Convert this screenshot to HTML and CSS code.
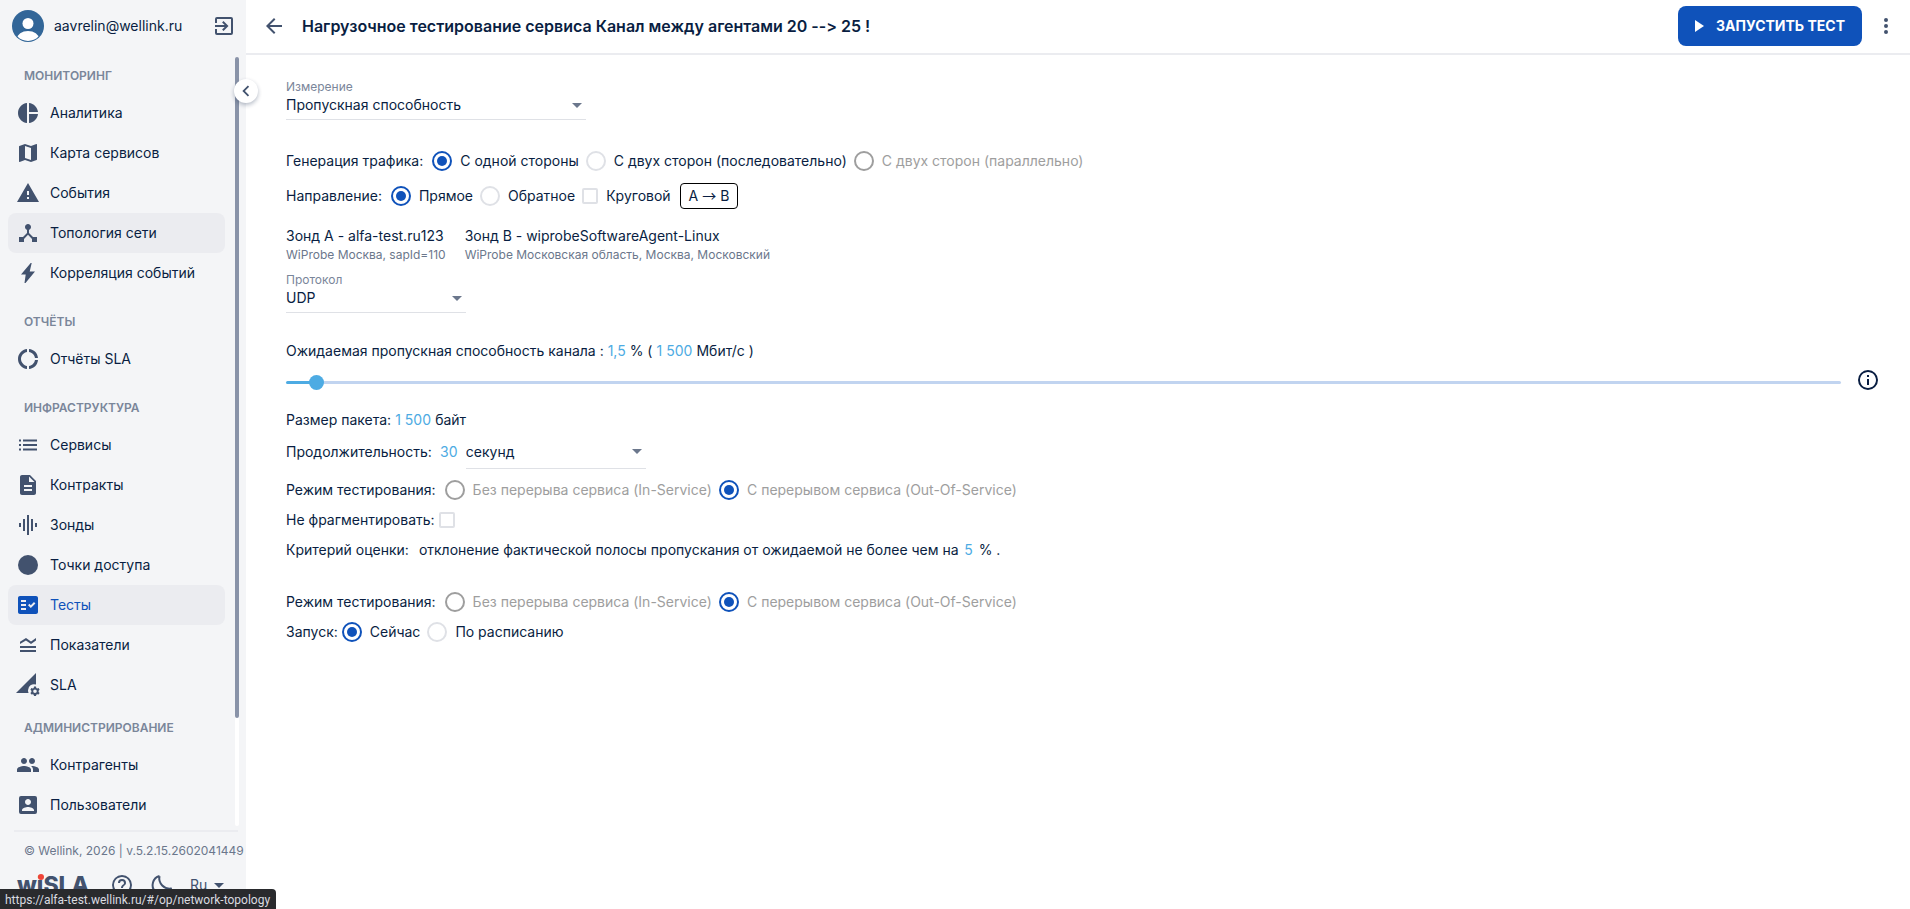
FILE: index.html
```html
<!DOCTYPE html>
<html lang="ru">
<head>
    <meta charset="UTF-8">
    <meta name="viewport" content="width=device-width, initial-scale=1.0">
    <title>wiSLA</title>
    <link rel="stylesheet" href="styles.css">
</head>
<body>

<aside class="sidebar">
    <div class="user">
        <svg class="avatar" viewBox="0 0 32 32">
            <defs><clipPath id="avatarClip"><circle cx="16" cy="16" r="15"/></clipPath></defs>
            <circle cx="16" cy="16" r="16" fill="#326698"/>
            <circle cx="16" cy="13.500" r="5.500" fill="#fff"/>
            <ellipse cx="16" cy="29" rx="11" ry="8" fill="#fff" clip-path="url(#avatarClip)"/>
        </svg>
        <span class="user-name">aavrelin@wellink.ru</span>
        <button class="icon-button" type="button" aria-label="Выход">
            <svg class="icon" viewBox="0 0 24 24"><path d="M10.090 15.590 11.500 17l5-5-5-5-1.410 1.410L12.670 11H3v2h9.670zM19 3H5a2 2 0 0 0-2 2v4h2V5h14v14H5v-4H3v4a2 2 0 0 0 2 2h14a2 2 0 0 0 2-2V5a2 2 0 0 0-2-2"/></svg>
        </button>
    </div>

    <div class="nav-area">
        <nav class="nav">
            <section class="nav-group">
                <h2>Мониторинг</h2>
                <a href="#"><svg class="icon" viewBox="0 0 24 24"><path d="M11 2v20c-5.070-.5-9-4.790-9-10s3.930-9.500 9-10m2.030 0v8.990H22c-.47-4.740-4.240-8.520-8.970-8.990m0 11.010V22c4.740-.47 8.500-4.250 8.970-8.990z"/></svg>Аналитика</a>
                <a href="#"><svg class="icon" viewBox="0 0 24 24"><path d="m20.500 3-.16.030L15 5.100 9 3 3.360 4.900c-.21.070-.36.250-.36.480V20.500c0 .28.220.5.500.5l.16-.03L9 18.900l6 2.100 5.640-1.900c.21-.07.36-.25.36-.48V3.500c0-.28-.22-.5-.5-.5M15 19l-6-2.110V5l6 2.110z"/></svg>Карта сервисов</a>
                <a href="#"><svg class="icon" viewBox="0 0 24 24"><path d="M1 21h22L12 2zm12-3h-2v-2h2zm0-4h-2v-4h2z"/></svg>События</a>
                <a href="#" class="hovered"><svg class="icon" viewBox="0 0 24 24"><path d="m17 16-4-4V8.820C14.160 8.400 15 7.300 15 6c0-1.660-1.340-3-3-3S9 4.340 9 6c0 1.300.84 2.400 2 2.820V12l-4 4H3v5h5v-3.050l4-4.200 4 4.200V21h5v-5z"/></svg>Топология сети</a>
                <a href="#"><svg class="icon" viewBox="0 0 24 24"><path d="M14.700 2 5 13.500h4.700L8.500 22h1L19 10.500h-5.300L15.700 2z"/></svg>Корреляция событий</a>
            </section>
            <section class="nav-group">
                <h2>Отчёты</h2>
                <a href="#"><svg class="icon" viewBox="0 0 24 24"><path d="M11 5.080V2c-5 .5-9 4.810-9 10s4 9.500 9 10v-3.080c-3-.48-6-3.400-6-6.920s3-6.440 6-6.920M18.970 11H22c-.47-5-4-8.530-9-9v3.080C16 5.510 18.540 8 18.970 11M13 18.920V22c5-.47 8.530-4 9-9h-3.030c-.43 3-2.970 5.490-5.970 5.920"/></svg>Отчёты SLA</a>
            </section>
            <section class="nav-group">
                <h2>Инфраструктура</h2>
                <a href="#"><svg class="icon" viewBox="0 0 24 24"><path d="M3 11h2v2H3zm0 4.500h2v2H3zm0-9h2v2H3zm4 4.500h14v2H7zm0 4.500h14v2H7zm0-9h14v2H7z"/></svg>Сервисы</a>
                <a href="#"><svg class="icon" viewBox="0 0 24 24"><path d="M14 2H6c-1.100 0-1.990.9-1.990 2L4 20c0 1.100.89 2 1.990 2H18c1.100 0 2-.9 2-2V8zm2 16H8v-2h8zm0-4H8v-2h8zm-3-5V3.500L18.500 9z"/></svg>Контракты</a>
                <a href="#"><svg class="icon" viewBox="0 0 24 24"><path d="M7 18h2V6H7zm4 4h2V2h-2zm-8-8h2v-4H3zm12 4h2V6h-2zm4-8v4h2v-4z"/></svg>Зонды</a>
                <a href="#"><svg class="icon" viewBox="0 0 24 24"><circle cx="12" cy="12" r="10"/></svg>Точки доступа</a>
                <a href="#" class="active"><svg class="icon" viewBox="0 0 24 24"><path fill-rule="evenodd" d="M20 3H4c-1.100 0-2 .9-2 2v14c0 1.100.9 2 2 2h16c1.100 0 2-.9 2-2V5c0-1.100-.9-2-2-2M10 17H5v-2h5zm0-4H5v-2h5zm0-4H5V7h5zm4.820 6L12 12.160l1.410-1.410 1.410 1.420L17.990 9l1.420 1.420z"/></svg>Тесты</a>
                <a href="#"><svg class="icon" viewBox="0 0 24 24"><path d="M20 15H4v-2h16zm0 2H4v2h16zm-5-6 5-3.550V5l-5 3.550L10 5 4 8.660V11l5.920-3.610z"/></svg>Показатели</a>
                <a href="#"><svg class="icon" viewBox="0 0 24 24"><path fill-rule="evenodd" d="M20 0v11.600a6 6 0 0 0-8 5.700c0 .9.200 1.900.6 2.700H0zM18 13.500l-.3 1.400-.9.500-1.400-.4-1 1.700 1 1v1.200l-1 1 1 1.700 1.400-.4.900.5.300 1.400h2l.3-1.400.9-.5 1.400.4 1-1.700-1-1v-1.200l1-1-1-1.700-1.400.4-.9-.5-.3-1.400zm1 3a1.800 1.800 0 1 1 0 3.600 1.800 1.800 0 0 1 0-3.600"/></svg>SLA</a>
            </section>
            <section class="nav-group">
                <h2>Администрирование</h2>
                <a href="#"><svg class="icon" viewBox="0 0 24 24"><path d="M16 11c1.660 0 2.990-1.340 2.990-3S17.660 5 16 5s-3 1.340-3 3 1.340 3 3 3m-8 0c1.660 0 2.990-1.340 2.990-3S9.660 5 8 5 5 6.340 5 8s1.340 3 3 3m0 2c-2.330 0-7 1.170-7 3.500V19h14v-2.500c0-2.330-4.670-3.500-7-3.500m8 0c-.29 0-.62.020-.97.050 1.160.84 1.970 1.970 1.970 3.450V19h6v-2.500c0-2.330-4.670-3.500-7-3.500"/></svg>Контрагенты</a>
                <a href="#"><svg class="icon" viewBox="0 0 24 24"><path d="M19 3H5a2 2 0 0 0-2 2v14a2 2 0 0 0 2 2h14a2 2 0 0 0 2-2V5a2 2 0 0 0-2-2m-7 3c1.660 0 3 1.340 3 3s-1.340 3-3 3-3-1.340-3-3 1.340-3 3-3m6 12H6v-1c0-2 4-3.100 6-3.100s6 1.100 6 3.100z"/></svg>Пользователи</a>
            </section>
        </nav>
        <div class="scrollbar"><div class="scrollbar-thumb"></div></div>
    </div>

    <footer class="footer">
        <p class="version">© Wellink, 2026 | v.5.2.15.2602041449</p>
        <div class="footer-tools">
            <span class="logo">w<span class="logo-i">i</span>SLA</span>
            <button class="icon-button" type="button" aria-label="Помощь">
                <svg class="icon" viewBox="0 0 24 24"><path d="M11 18h2v-2h-2zm1-16a10 10 0 1 0 0 20 10 10 0 0 0 0-20m0 18c-4.410 0-8-3.590-8-8s3.590-8 8-8 8 3.590 8 8-3.590 8-8 8m0-14a4 4 0 0 0-4 4h2a2 2 0 1 1 4 0c0 2-3 1.750-3 5h2c0-2.250 3-2.500 3-5a4 4 0 0 0-4-4"/></svg>
            </button>
            <button class="icon-button" type="button" aria-label="Тёмная тема">
                <svg class="icon" viewBox="0 0 24 24"><path d="M9.500 3A9.500 9.500 0 1 0 21 15.500C14.500 16.500 8 10.500 9.500 3" fill="none" stroke="currentColor" stroke-width="2" stroke-linejoin="round"/></svg>
            </button>
            <span class="select lang">
                <select aria-label="Язык"><option>Ru</option><option>En</option></select>
            </span>
        </div>
    </footer>

    <button class="collapse" type="button" aria-label="Свернуть меню">
        <svg class="icon" viewBox="0 0 24 24"><path d="M15.410 7.410 14 6l-6 6 6 6 1.410-1.410L10.830 12z"/></svg>
    </button>
</aside>

<main class="main">
    <header class="header">
        <button class="icon-button" type="button" aria-label="Назад">
            <svg class="icon" viewBox="0 0 24 24"><path d="M20 11H7.830l5.590-5.590L12 4l-8 8 8 8 1.410-1.410L7.830 13H20z"/></svg>
        </button>
        <h1>Нагрузочное тестирование сервиса Канал между агентами 20 --&gt; 25 !</h1>
        <button class="run-button" type="button">
            <svg viewBox="0 0 9 12"><path d="M0 0v12l9-6z"/></svg>
            Запустить тест
        </button>
        <button class="icon-button" type="button" aria-label="Меню">
            <svg class="icon" viewBox="0 0 24 24"><path d="M12 8a2 2 0 1 0 0-4 2 2 0 0 0 0 4m0 2a2 2 0 1 0 0 4 2 2 0 0 0 0-4m0 6a2 2 0 1 0 0 4 2 2 0 0 0 0-4"/></svg>
        </button>
    </header>

    <form class="form">
        <div class="field field-wide">
            <label for="measure">Измерение</label>
            <span class="select">
                <select id="measure"><option>Пропускная способность</option></select>
            </span>
        </div>

        <div class="row row-tall row-traffic" role="radiogroup" aria-label="Генерация трафика">
            <span class="caption">Генерация трафика:</span>
            <label class="choice"><input type="radio" name="traffic" checked>С одной стороны</label>
            <label class="choice"><input type="radio" name="traffic">С двух сторон (последовательно)</label>
            <label class="choice"><input type="radio" name="traffic" disabled>С двух сторон (параллельно)</label>
        </div>
        <div class="row row-tall" role="radiogroup" aria-label="Направление">
            <span class="caption">Направление:</span>
            <label class="choice"><input type="radio" name="direction" checked>Прямое</label>
            <label class="choice"><input type="radio" name="direction">Обратное</label>
            <label class="choice"><input type="checkbox" name="circular">Круговой</label>
            <span class="route">A <span class="arrow">→</span> B</span>
        </div>

        <div class="probes">
            <div>
                <p>Зонд A - alfa-test.ru123</p>
                <small>WiProbe Москва, sapId=110</small>
            </div>
            <div>
                <p>Зонд B - wiprobeSoftwareAgent-Linux</p>
                <small>WiProbe Московская область, Москва, Московский</small>
            </div>
        </div>

        <div class="field">
            <label for="protocol">Протокол</label>
            <span class="select">
                <select id="protocol"><option>UDP</option><option>TCP</option></select>
            </span>
        </div>

        <div class="row row-bandwidth">
            <label for="percent">Ожидаемая пропускная способность канала :</label>
            <input class="number number-short" id="percent" type="text" value="1,5">
            <span>% (</span>
            <input class="number number-long" type="text" value="1 500" aria-label="Мбит/с">
            <span>Мбит/с )</span>
        </div>
        <div class="slider-row">
            <input class="slider" type="range" min="0" max="100" step="0.1" value="1.5" aria-label="Пропускная способность, %">
            <button class="icon-button info" type="button" aria-label="Информация">
                <svg class="icon" viewBox="0 0 24 24"><path d="M11 7h2v2h-2zm0 4h2v6h-2zm1-9a10 10 0 1 0 0 20 10 10 0 0 0 0-20m0 18c-4.410 0-8-3.590-8-8s3.590-8 8-8 8 3.590 8 8-3.590 8-8 8"/></svg>
            </button>
        </div>

        <div class="row row-packet">
            <label for="packet">Размер пакета:</label>
            <input class="number number-long" id="packet" type="text" value="1 500">
            <span>байт</span>
        </div>
        <div class="row row-duration">
            <label for="duration">Продолжительность:</label>
            <input class="number number-short" id="duration" type="text" value="30">
            <span class="select">
                <select aria-label="Единица времени"><option>секунд</option><option>минут</option></select>
            </span>
        </div>
        <div class="row" role="radiogroup" aria-label="Режим тестирования">
            <span class="caption">Режим тестирования:</span>
            <label class="choice"><input type="radio" name="mode" disabled>Без перерыва сервиса (In-Service)</label>
            <label class="choice"><input type="radio" name="mode" checked disabled>С перерывом сервиса (Out-Of-Service)</label>
        </div>
        <div class="row row-fragment">
            <label for="fragment">Не фрагментировать:</label>
            <input type="checkbox" id="fragment">
        </div>
        <div class="row row-criterion">
            <span class="caption">Критерий оценки:</span>
            <label for="criterion">отклонение фактической полосы пропускания от ожидаемой не более чем на</label>
            <input class="number number-digit" id="criterion" type="text" value="5">
            <span>% .</span>
        </div>

        <div class="row row-schedule" role="radiogroup" aria-label="Режим тестирования">
            <span class="caption">Режим тестирования:</span>
            <label class="choice"><input type="radio" name="mode2" disabled>Без перерыва сервиса (In-Service)</label>
            <label class="choice"><input type="radio" name="mode2" checked disabled>С перерывом сервиса (Out-Of-Service)</label>
        </div>
        <div class="row" role="radiogroup" aria-label="Запуск">
            <span>Запуск:</span>
            <label class="choice choice-first"><input type="radio" name="start" checked>Сейчас</label>
            <label class="choice"><input type="radio" name="start">По расписанию</label>
        </div>
    </form>
</main>

<div class="status-url">https://alfa-test.wellink.ru/#/op/network-topology</div>

</body>
</html>
```
FILE: styles.css
```css
* {
    box-sizing: border-box;
}
body {
    margin: 0;
    height: 100vh;
    display: flex;
    overflow: hidden;
    font-family: Inter, "Liberation Sans", sans-serif;
    font-size: 14px;
    line-height: 20px;
    font-feature-settings: "calt" 0;
    color: #091e42;
    background-color: #fff;
}
h1, h2, p {
    margin: 0;
}
button, input, select {
    font: inherit;
    font-feature-settings: inherit;
    color: inherit;
    margin: 0;
    padding: 0;
    border: 0;
    background: none;
}
.icon {
    display: block;
    width: 24px;
    height: 24px;
    flex: none;
    fill: currentColor;
}
.icon-button {
    display: flex;
    flex: none;
    color: #42526e;
    cursor: pointer;
}

/* Sidebar */
.sidebar {
    position: relative;
    display: flex;
    flex-direction: column;
    flex: none;
    width: 246px;
    background-color: #f4f5f7;
}
.user {
    display: flex;
    align-items: center;
    flex: none;
    height: 53px;
    padding: 0 10px 1px 12px;
}
.avatar {
    width: 32px;
    height: 32px;
}
.user-name {
    flex: 1;
    padding-left: 10px;
}
.nav-area {
    display: flex;
    flex: 1;
    min-height: 0;
    padding-right: 7px;
}
.nav {
    flex: 1;
    padding: 0 10px 0 8px;
    overflow-y: auto;
    scrollbar-width: none;
}
.nav-group {
    margin-bottom: 6px;
}
.nav-group:nth-last-child(2) {
    margin-bottom: 0;
}
.nav-group h2 {
    height: 40px;
    padding: 13px 16px 0;
    font-size: 12px;
    line-height: 20px;
    font-weight: 600;
    text-transform: uppercase;
    color: #7a869a;
}
.nav-group a {
    display: flex;
    align-items: center;
    gap: 10px;
    height: 40px;
    padding: 0 8px;
    border-radius: 8px;
    color: inherit;
    text-decoration: none;
}
.nav-group a .icon {
    color: #42526e;
}
.nav-group a.hovered,
.nav-group a.active {
    background-color: #ebecf0;
}
.nav-group a.active,
.nav-group a.active .icon {
    color: #0f52ba;
}
.scrollbar {
    flex: none;
    width: 4px;
    margin: 4px 0;
    border-radius: 2px;
    background-color: #fff;
}
.scrollbar-thumb {
    height: 86%;
    border-radius: 2px;
    background-color: #8993a8;
}
.footer {
    flex: none;
    height: 79px;
    margin-left: 14px;
    overflow: hidden;
}
.version {
    margin-right: 8px;
    padding: 11px 0 0 10px;
    border-top: 2px solid #ebecf0;
    font-size: 12px;
    line-height: 16px;
    white-space: nowrap;
    color: #6b778c;
}
.footer-tools {
    display: flex;
    align-items: center;
    height: 32px;
    margin-top: 10px;
    gap: 16px;
    color: #42526e;
}
.logo {
    width: 80px;
    padding-left: 3px;
    font-size: 23px;
    font-weight: 800;
}
.logo-i {
    position: relative;
}
.logo-i::before {
    content: "";
    position: absolute;
    top: 3px;
    left: 1px;
    width: 6px;
    height: 6px;
    border-radius: 50%;
    background-color: #f04438;
}
.collapse {
    position: absolute;
    top: 79px;
    right: -12px;
    display: flex;
    align-items: center;
    justify-content: center;
    width: 24px;
    height: 24px;
    border-radius: 50%;
    background-color: #fff;
    box-shadow: 0 2px 4px rgba(9, 30, 66, 0.3);
    color: #42526e;
    cursor: pointer;
}
.collapse .icon {
    width: 22px;
    height: 22px;
}

/* Header */
.main {
    flex: 1;
    min-width: 0;
}
.header {
    display: flex;
    align-items: center;
    height: 55px;
    padding: 0 12px 1px 16px;
    border-bottom: 2px solid #ebecf0;
}
.header h1 {
    flex: 1;
    padding-left: 16px;
    font-size: 16px;
    font-weight: 600;
}
.run-button {
    display: flex;
    align-items: center;
    gap: 12px;
    height: 40px;
    margin-right: 12px;
    padding: 0 17px;
    border-radius: 8px;
    background-color: #0f52ba;
    color: #fff;
    font-weight: 700;
    text-transform: uppercase;
    cursor: pointer;
}
.run-button svg {
    width: 9px;
    height: 12px;
    fill: currentColor;
}

/* Test form */
.form {
    padding: 24px 30px 24px 40px;
}
.field {
    width: 180px;
}
.field-wide {
    width: 300px;
}
.field label {
    display: block;
    font-size: 12px;
    line-height: 16px;
    color: #7a869a;
}
.select {
    position: relative;
    display: block;
}
.select::after {
    content: "";
    position: absolute;
    top: 8px;
    right: 4px;
    border: 5px solid transparent;
    border-top-color: #6b778c;
    border-bottom: 0;
    pointer-events: none;
}
.select select {
    display: block;
    width: 100%;
    height: 25px;
    padding-bottom: 4px;
    border-bottom: 1px solid #dfe1e6;
    appearance: none;
    cursor: pointer;
}
.select.lang {
    width: 34px;
}
.select.lang select {
    height: 20px;
    padding: 0;
    border: 0;
}
.select.lang::after {
    right: 0;
    border-top-color: #42526e;
}
.row {
    display: flex;
    align-items: center;
    height: 30px;
    white-space: nowrap;
}
.row-tall {
    height: 35px;
}
.caption {
    margin-right: 2px;
}
.choice {
    display: flex;
    align-items: center;
    gap: 8px;
    margin-left: 7px;
}
.choice-first {
    margin-left: 4px;
}
.choice:has(input:disabled) {
    color: #9e9e9e;
}
input[type="radio"],
input[type="checkbox"] {
    display: grid;
    place-items: center;
    flex: none;
    width: 20px;
    height: 20px;
    border: 2px solid #dfe1e6;
    border-radius: 50%;
    appearance: none;
}
input[type="checkbox"] {
    width: 16px;
    height: 16px;
    border-radius: 2px;
}
input[type="radio"]:disabled {
    border-color: #9e9e9e;
}
input[type="radio"]:checked {
    border-color: #0f52ba;
}
input[type="radio"]:checked::before {
    content: "";
    width: 10px;
    height: 10px;
    border-radius: 50%;
    background-color: #0f52ba;
}
.route {
    height: 26px;
    margin-left: 9px;
    padding: 2px 8px;
    border: 1px solid #000;
    border-radius: 4px;
}
.arrow {
    font-family: "Noto Sans CJK SC", "Liberation Sans", sans-serif;
    line-height: 1;
}
.number {
    text-align: center;
    color: #4dabe3;
}
.number-short {
    width: 20px;
}
.number-long {
    width: 38px;
}
.number-digit {
    width: 10px;
}
.row-traffic {
    margin-top: 23px;
}
.probes {
    display: flex;
    gap: 19px;
    margin: 13px 0 8px;
}
.probes small {
    display: block;
    font-size: 12px;
    line-height: 18px;
    color: #6b778c;
}
.row-bandwidth {
    margin-top: 23px;
    gap: 3px;
}
.slider-row {
    display: flex;
    align-items: center;
    gap: 15px;
    height: 30px;
    margin-top: 1px;
}
.slider {
    flex: 1;
    height: 15px;
    appearance: none;
    cursor: pointer;
}
.slider::-webkit-slider-runnable-track {
    height: 3px;
    border-radius: 2px;
    background: linear-gradient(to right, #4dabe3 2%, #c1d4f0 2%);
}
.slider::-webkit-slider-thumb {
    width: 15px;
    height: 15px;
    margin-top: -6px;
    border-radius: 50%;
    background-color: #4dabe3;
    appearance: none;
}
.info {
    align-self: flex-start;
    padding-top: 1px;
    color: #091e42;
}
.row-packet {
    margin-top: 8px;
    gap: 3px;
}
.row-duration {
    height: 34px;
    margin-bottom: 6px;
    gap: 7px;
}
.row-duration .select {
    align-self: flex-end;
    width: 180px;
}
.row-duration .select select {
    height: 28px;
    padding-bottom: 6px;
}
.row-fragment {
    gap: 4px;
}
.row-criterion {
    gap: 5px;
}
.row-criterion .caption {
    margin-right: 5px;
}
.row-schedule {
    margin-top: 22px;
}

/* Link address shown at the bottom of the window */
.status-url {
    position: fixed;
    left: 0;
    bottom: 0;
    height: 20px;
    padding: 1px 6px 0 5px;
    border-top-right-radius: 4px;
    background-color: #292a2d;
    color: #dadce0;
    font-family: Roboto, sans-serif;
    font-size: 12px;
}
```
